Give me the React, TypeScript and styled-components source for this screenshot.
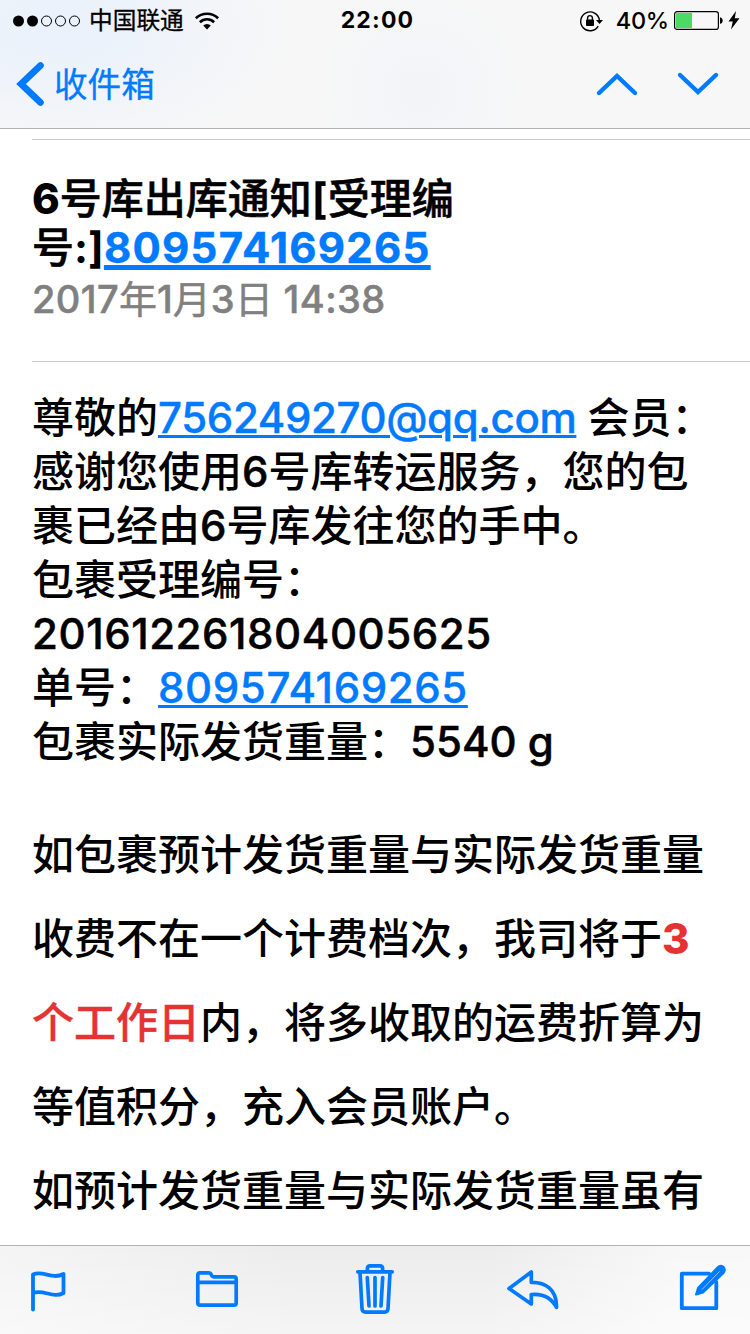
import React from 'react';
import styled, { createGlobalStyle } from 'styled-components';

const BLUE = '#007aff';

const GlobalStyle = createGlobalStyle`
  * { box-sizing: border-box; }
  html, body { margin: 0; padding: 0; background: #fff; }
  body {
    font-family: Inter, "Noto Sans CJK SC", sans-serif;
    color: #000;
    font-kerning: normal;
  }
  svg { display: block; flex: none; overflow: visible; }
`;

const Screen = styled.div`
  width: 750px;
  height: 1334px;
  display: flex;
  flex-direction: column;
  overflow: hidden;
  background: #fff;
`;

const Header = styled.header`
  flex: none;
  height: 129px;
  border-bottom: 1px solid #b2b2b2;
  background:
    radial-gradient(circle at 420px 90px, rgba(236, 242, 250, 0.5), rgba(240, 244, 250, 0) 110px),
    radial-gradient(ellipse 240px 130px at 60px 30px, #e9f1fc, rgba(240, 245, 252, 0)),
    #f7f7f7;
`;

const StatusBar = styled.div`
  height: 41px;
  padding: 0 10px 0 13px;
  display: grid;
  grid-template-columns: 1fr auto 1fr;
  align-items: center;
`;

const StatusGroup = styled.div<{ $end?: boolean }>`
  display: flex;
  align-items: center;
  justify-content: ${(p) => (p.$end ? 'flex-end' : 'flex-start')};
`;

const Carrier = styled.span`
  margin: 0 11px 0 9px;
  font-size: 23.7px;
  line-height: 41px;
  -webkit-text-stroke: 0.3px #000;
`;

const Clock = styled.span`
  padding-left: 2px;
  font-size: 23px;
  font-weight: 700;
  letter-spacing: 1.2px;
  line-height: 41px;
`;

const Percent = styled.span`
  margin: 0 5px 0 12px;
  font-size: 23.5px;
  font-weight: 500;
  letter-spacing: -0.2px;
  line-height: 41px;
`;

const NavBar = styled.nav`
  height: 86px;
  padding: 0 32px 0 17px;
  display: flex;
  align-items: center;
  justify-content: space-between;
`;

const BackButton = styled.a`
  display: flex;
  align-items: center;
  gap: 10px;
  color: ${BLUE};
  font-size: 33.6px;
  line-height: 86px;
`;

const BackLabel = styled.span`
  padding-top: 2px;
  -webkit-text-stroke: 0.3px ${BLUE};
`;

const Arrows = styled.div`
  display: flex;
  gap: 41px;
`;

const Mail = styled.main`
  flex: 1;
  min-height: 0;
  overflow: hidden;
  padding: 10px 0 0 32px;
`;

const Heading = styled.section`
  height: 223px;
  padding-top: 34px;
  border-top: 1px solid #c8c8cb;
  border-bottom: 1px solid #c8c8cb;
`;

const Subject = styled.h1`
  margin: 0 0 2px;
  font-size: 42px;
  font-weight: 500;
  line-height: 49px;
  white-space: nowrap;
  -webkit-text-stroke: 0.6px currentColor;
`;

const SentAt = styled.div`
  font-size: 38px;
  font-weight: 400;
  line-height: 50px;
  color: #808080;
  white-space: nowrap;
  -webkit-text-stroke: 0.5px #808080;
`;

const Paragraph = styled.div<{ $line: number; $top: number }>`
  margin-top: ${(p) => p.$top}px;
  font-size: 42px;
  font-weight: 500;
  line-height: ${(p) => p.$line}px;
  white-space: nowrap;
`;

const Line = styled.div``;

const Run = styled.span<{ $track?: number; $weight?: number }>`
  font-weight: ${(p) => p.$weight ?? 500};
  letter-spacing: ${(p) => p.$track ?? 0}px;
  -webkit-text-stroke: ${(p) => ((p.$weight ?? 500) > 500 ? 0 : 0.5)}px currentColor;
`;

const Link = styled.a<{ $track?: number; $thick?: number; $weight?: number }>`
  color: ${BLUE};
  font-weight: ${(p) => p.$weight ?? 500};
  letter-spacing: ${(p) => p.$track ?? 0}px;
  text-decoration: underline;
  text-decoration-thickness: ${(p) => p.$thick ?? 3}px;
  text-underline-offset: 2px;
  -webkit-text-stroke: 0.4px ${BLUE};
`;

const Alert = styled.span<{ $weight?: number }>`
  color: #e53333;
  font-weight: ${(p) => p.$weight ?? 500};
  -webkit-text-stroke: ${(p) => (p.$weight ? 0 : 0.4)}px #e53333;
`;

const Toolbar = styled.footer`
  flex: none;
  height: 89px;
  padding: 0 24px 0 31px;
  display: flex;
  align-items: center;
  border-top: 1px solid #b2b2b2;
  background: linear-gradient(180deg, rgba(255, 255, 255, 0), rgba(255, 255, 255, 0.45)),
    linear-gradient(90deg, #f4f4f4, #ececec 40%, #ececec 65%, #f8f8f8 92%);
`;

const ToolButton = styled.span<{ $gap?: number; $lift?: number; $drop?: number }>`
  margin-left: ${(p) => p.$gap ?? 0}px;
  padding-top: ${(p) => p.$drop ?? 0}px;
  padding-bottom: ${(p) => p.$lift ?? 0}px;
`;

const stroke = { fill: 'none', stroke: BLUE, strokeLinecap: 'round', strokeLinejoin: 'round' } as const;

const Signal = () => (
  <svg width="67" height="12" viewBox="0 0 67 12">
    {[0, 1, 2, 3, 4].map((i) => (
      <circle key={i} cx={5.5 + i * 14} cy="6" r={i < 2 ? 5.5 : 5} fill={i < 2 ? '#000' : 'none'} stroke={i < 2 ? 'none' : '#000'} />
    ))}
  </svg>
);

const Wifi = () => (
  <svg width="24" height="18" viewBox="0 0 24 18">
    <g fill="none" stroke="#000" strokeWidth="2.6">
      <path d="M0.9 6.3a15.8 15.8 0 0 1 22.2 0" />
      <path d="M4.9 10.2a10.2 10.2 0 0 1 14.2 0" />
    </g>
    <path d="M8.2 13.5a5.5 5.5 0 0 1 7.6 0L12 17.4z" />
  </svg>
);

const RotationLock = () => (
  <svg width="24" height="20" viewBox="0 0 24 20">
    <path d="M18.2 15.1A9.4 9.4 0 1 1 19.4 9" fill="none" stroke="#000" strokeWidth="1.4" />
    <path d="M16 9h7l-3.5 4z" />
    <rect x="6" y="8.5" width="8" height="6.5" rx="0.8" />
    <path d="M7.6 9V7a2.4 2.4 0 0 1 4.8 0v2" fill="none" stroke="#000" strokeWidth="1.4" />
  </svg>
);

const Battery = () => (
  <svg width="49" height="19" viewBox="0 0 49 19">
    <rect x="0.6" y="0.6" width="43.8" height="17.8" rx="2.5" fill="none" stroke="#000" strokeWidth="1.2" />
    <rect x="2" y="2" width="16" height="15" fill="#4cd964" />
    <path d="M46 6.2c3.6.5 3.6 6.1 0 6.6z" />
  </svg>
);

const BoltIcon = styled.svg`
  margin-left: 5px;
`;

const Bolt = () => (
  <BoltIcon width="12" height="19" viewBox="0 0 12 19">
    <path d="M8 0L0.5 10.5h4.3L3 18.5L11.5 7.3H6.8z" />
  </BoltIcon>
);

const BackChevron = () => (
  <svg width="27" height="44" viewBox="0 0 27 44">
    <path d="M23.5 3.5L4 22l19.5 18.5" {...stroke} strokeWidth="6.6" strokeLinejoin="miter" />
  </svg>
);

const Chevron = ({ down }: { down?: boolean }) => (
  <svg width="40" height="22" viewBox="0 0 40 22">
    <path d={down ? 'M2 2L20 19L38 2' : 'M2 20L20 3L38 20'} {...stroke} strokeWidth="4.4" strokeLinejoin="miter" />
  </svg>
);

const Flag = () => (
  <svg width="35" height="41" viewBox="0 0 35 41">
    <path d="M2 38.5V3.5C12-1 21 9 32.5 3V22C22 28 13 18 2 22" {...stroke} strokeWidth="3.8" />
  </svg>
);

const Folder = () => (
  <svg width="42" height="36" viewBox="0 0 42 36">
    <path d="M1.8 32V4Q1.8 1.8 4 1.8H13Q14.5 1.8 15.2 3.5Q16 5.8 17.5 5.8H38Q40.2 5.8 40.2 8V32Q40.2 34.2 38 34.2H4Q1.8 34.2 1.8 32ZM2 11.4H40" {...stroke} strokeWidth="3.7" />
  </svg>
);

const Trash = () => (
  <svg width="38" height="50" viewBox="0 0 38 50">
    <g {...stroke} strokeWidth="3.7">
      <path d="M1.8 7.8H36.2M11.4 7V4.5Q11.4 1.8 14 1.8H24Q26.6 1.8 26.6 4.5V7" />
      <path d="M4 8.5L6 44.5Q6.2 48.2 9.5 48.2H28.5Q31.8 48.2 32 44.5L34 8.5" />
      <path d="M11.3 13.5L13 42M19 13.5V42M26.7 13.5L25 42" />
    </g>
  </svg>
);

const Reply = () => (
  <svg width="52" height="40" viewBox="0 0 52 40">
    <path d="M2 18.5L24.3 2V12.3C38 12 50 19 49.5 37.5C44 27 35 23.5 24.3 24.5V34Z" {...stroke} strokeWidth="3.7" />
  </svg>
);

const Compose = () => (
  <svg width="46" height="46" viewBox="0 0 46 46">
    <path d="M29 9.7H1.8V44.2H36.3V18" {...stroke} strokeWidth="3.8" />
    <path d="M16 30.5L18 24L37.5 3.500Q40.500 0.500 43.500 3Q46 6 43.500 9L23 28.500Z" fill={BLUE} stroke={BLUE} strokeWidth="2" strokeLinejoin="round" />
    <path d="M22 25.5L39.5 7.5" stroke="#b8d9fc" strokeWidth="0.8" />
  </svg>
);

export default function App() {
  return (
    <Screen lang="zh-CN">
      <GlobalStyle />
      <Header>
        <StatusBar>
          <StatusGroup>
            <Signal />
            <Carrier>中国联通</Carrier>
            <Wifi />
          </StatusGroup>
          <Clock>22:00</Clock>
          <StatusGroup $end>
            <RotationLock />
            <Percent>40%</Percent>
            <Battery />
            <Bolt />
          </StatusGroup>
        </StatusBar>
        <NavBar>
          <BackButton>
            <BackChevron />
            <BackLabel>收件箱</BackLabel>
          </BackButton>
          <Arrows>
            <Chevron />
            <Chevron down />
          </Arrows>
        </NavBar>
      </Header>
      <Mail>
        <Heading>
          <Subject>
            <Line>
              <Run $weight={800}>6</Run>号库出库通知<Run $weight={700}>[</Run>受理编
            </Line>
            <Line>
              号<Run $weight={700}>:]</Run>
              <Link $thick={5} $weight={700} $track={1.25}>809574169265</Link>
            </Line>
          </Subject>
          <SentAt>
            <Run $track={0.4}>2017</Run>年<Run>1</Run>月<Run $track={0.4}>3</Run>日
            <Run $track={0.4}> 14:38</Run>
          </SentAt>
        </Heading>
        <Paragraph $line={54} $top={29}>
          <Line>
            尊敬的<Link $track={-0.38}>756249270@qq.com</Link> 会员：
          </Line>
          <Line>
            感谢您使用<Run>6</Run>号库转运服务，您的包
          </Line>
          <Line>
            裹已经由<Run>6</Run>号库发往您的手中。
          </Line>
          <Line>包裹受理编号：</Line>
          <Line>
            <Run $track={0.57}>201612261804005625</Run>
          </Line>
          <Line>
            单号：<Link $track={0.6}>809574169265</Link>
          </Line>
          <Line>
            包裹实际发货重量：<Run>5540 g</Run>
          </Line>
        </Paragraph>
        <Paragraph $line={84} $top={44}>
          <Line>如包裹预计发货重量与实际发货重量</Line>
          <Line>
            收费不在一个计费档次，我司将于<Alert $weight={800}>3</Alert>
          </Line>
          <Line>
            <Alert>个工作日</Alert>内，将多收取的运费折算为
          </Line>
          <Line>等值积分，充入会员账户。</Line>
          <Line>如预计发货重量与实际发货重量虽有</Line>
        </Paragraph>
      </Mail>
      <Toolbar>
        <ToolButton $drop={3}><Flag /></ToolButton>
        <ToolButton $gap={130} $lift={2}><Folder /></ToolButton>
        <ToolButton $gap={118} $lift={3}><Trash /></ToolButton>
        <ToolButton $gap={113}><Reply /></ToolButton>
        <ToolButton $gap={121} $lift={6}><Compose /></ToolButton>
      </Toolbar>
    </Screen>
  );
}
